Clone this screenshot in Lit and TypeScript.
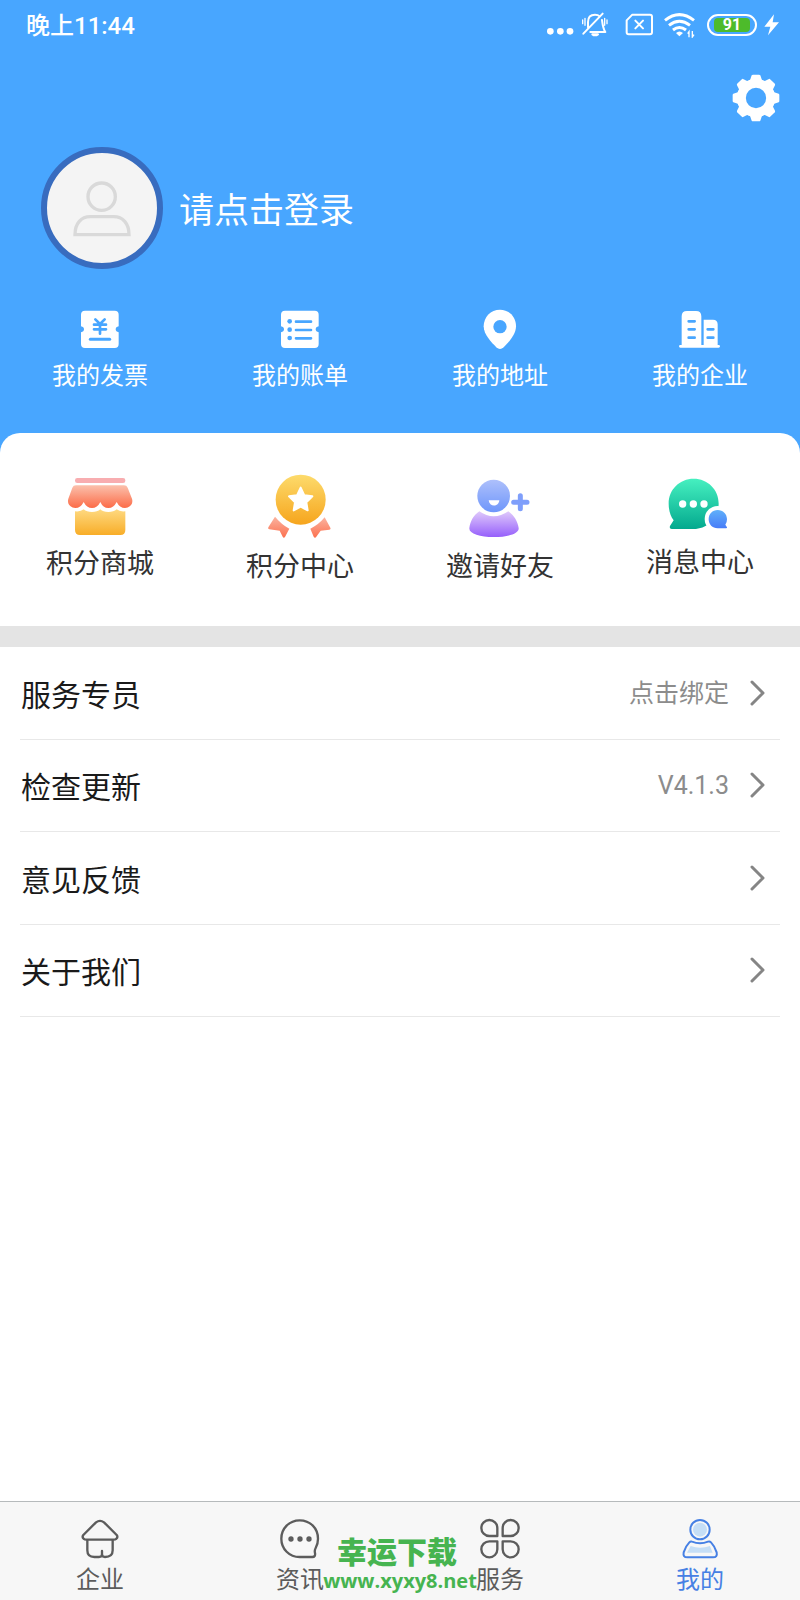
import { LitElement, html, svg, css, type TemplateResult } from "lit";
import { customElement, state } from "lit/decorators.js";

interface Shortcut {
  label: string;
  icon: TemplateResult;
}

interface Row {
  label: string;
  value?: string;
}

const gearTeeth = [0, 45, 90, 135, 180, 225, 270, 315];

const statusDots = html`<svg width="28" height="27" viewBox="78 33 84 81" fill="#fff" aria-hidden="true">
  <circle cx="91" cy="94" r="10" /><circle cx="121" cy="94" r="10" /><circle cx="150" cy="94" r="10" />
</svg>`;

const bellOff = html`<svg width="37" height="27" viewBox="183 33 111 81" fill="none" stroke="#fff" stroke-width="6" stroke-linecap="round" stroke-linejoin="round" aria-hidden="true">
  <path d="M204 82V66C204 50 213 44 225 44C231 44 236 46 239 49" />
  <path d="M246 60C248 76 249 86 256 96H211" />
  <path d="M190 101L248 41" />
  <path d="M217 103Q225 109 234 103Z" fill="#fff" />
  <path d="M195 55V76M188 60V71M254 55V76M261 60V71" stroke-width="4" />
</svg>`;

const simOff = html`<svg width="31" height="27" viewBox="315 33 93 81" fill="none" stroke="#fff" stroke-width="6" stroke-linejoin="round" aria-hidden="true">
  <path d="M337 44H390Q396 44 396 50V97Q396 103 390 103H326Q320 103 320 97V61Z" />
  <path d="M346 62L369 85M369 62L346 85" stroke-linecap="round" />
</svg>`;

const wifi = html`<svg width="37" height="27" viewBox="429 33 111 81" fill="none" stroke="#fff" stroke-width="9" aria-hidden="true">
  <path d="M435 61Q478 27 522 61" />
  <path d="M447 76Q478 52 510 76" />
  <path d="M459 90Q478 75 498 90" />
  <path d="M468 99Q478 90 489 99L478 109Z" fill="#fff" stroke="none" />
  <path d="M507 112V95L503 101M517 93V111L522 104" stroke-width="4" />
</svg>`;

const bolt = html`<svg width="16" height="27" viewBox="732 33 48 81" fill="#fff" aria-hidden="true">
  <path d="M762 43L733 80H751L744 106L777 67H758Z" />
</svg>`;

const gear = html`<svg width="48" height="48" viewBox="-72 -72 144 144" aria-hidden="true">
  <circle r="44" fill="none" stroke="#fff" stroke-width="27" />
  ${gearTeeth.map(
    (a) => svg`<path transform="rotate(${a})" d="M-19 -50L-13 -68Q-12 -70 -9 -70H9Q12 -70 13 -68L19 -50Z" fill="#fff" />`
  )}
</svg>`;

const person = html`<svg width="60" height="60" viewBox="156 143 180 180" fill="none" stroke="#d9d9d9" stroke-width="10" aria-hidden="true">
  <circle cx="245" cy="199" r="41" />
  <path d="M165 313C165 278 184 259 211 259H281C308 259 327 278 327 313Z" />
</svg>`;

const ticket = (x: number) => svg`<path fill="#fff" d="M${x} 59Q${x} 47 ${x + 12} 47H${x + 101}Q${x + 113} 47 ${x + 113} 59V94Q${x + 104} 96 ${x + 104} 103Q${x + 104} 110 ${x + 113} 112V147Q${x + 113} 159 ${x + 101} 159H${x + 12}Q${x} 159 ${x} 147V112Q${x + 9} 110 ${x + 9} 103Q${x + 9} 96 ${x} 94Z" />`;

const quick: Shortcut[] = [
  {
    label: "我的发票",
    icon: html`<svg width="42" height="40" viewBox="237 42 126 120" fill="none" stroke="#48a6ff" stroke-width="8" stroke-linecap="round" aria-hidden="true">
      <g stroke="none">${ticket(243)}</g>
      <path d="M286 73L300 87L314 73M300 87V116M282 89H318M282 103H318" />
      <path d="M271 133H329" stroke-width="9" />
    </svg>`,
  },
  {
    label: "我的账单",
    icon: html`<svg width="42" height="40" viewBox="837 42 126 120" fill="#48a6ff" stroke="#48a6ff" aria-hidden="true">
      <g stroke="none">${ticket(843)}
        <circle cx="869" cy="79" r="7" /><circle cx="869" cy="104" r="7" /><circle cx="869" cy="129" r="7" /></g>
      <path d="M888 80H933M888 105H933M888 130H933" stroke-width="8" stroke-linecap="round" />
    </svg>`,
  },
  {
    label: "我的地址",
    icon: html`<svg width="42" height="40" viewBox="237 42 126 120" aria-hidden="true">
      <path fill="#fff" d="M300 44C272 44 251 66 251 94C251 119 275 143 289 157Q300 167 311 157C325 143 348 119 348 94C348 66 328 44 300 44Z" />
      <circle cx="300" cy="95" r="20" fill="#48a6ff" />
    </svg>`,
  },
  {
    label: "我的企业",
    icon: html`<svg width="42" height="40" viewBox="837 42 126 120" aria-hidden="true">
      <path fill="#fff" d="M845 150V64Q845 48 861 48H888Q904 48 904 64V150H911V74H939Q953 74 953 88V150H956Q960 150 960 154Q960 158 956 158H841Q837 158 837 154Q837 150 841 150Z" />
      <path d="M866 79H884M866 103H884M866 128H884M923 103H940M923 128H940" stroke="#48a6ff" stroke-width="8" stroke-linecap="round" />
    </svg>`,
  },
];

const features: Shortcut[] = [
  {
    label: "积分商城",
    icon: html`<svg width="66" height="64" viewBox="201 42 198 192" aria-hidden="true">
      <defs>
        <linearGradient id="awning" x1="0" y1="0" x2="0" y2="1"><stop offset="0" stop-color="#fbc0ac" /><stop offset="1" stop-color="#fc6c48" /></linearGradient>
        <linearGradient id="stall" x1="0" y1="0" x2="0" y2="1"><stop offset="0" stop-color="#fed980" /><stop offset="1" stop-color="#f8ad28" /></linearGradient>
      </defs>
      <rect x="225" y="54" width="151" height="15" rx="7" fill="#f8adb0" />
      <path fill="url(#awning)" d="M228 76H372Q380 76 383 83L396 116C401 133 388 144 375 144Q359 144 350 126Q341 144 325 144Q309 144 301 126Q292 144 276 144Q260 144 251 126Q242 144 226 144C213 144 200 133 205 116L217 83Q220 76 228 76Z" />
      <path fill="url(#stall)" d="M225 154Q242 156 251 148Q260 156 276 156Q292 156 301 148Q309 156 325 156Q341 156 350 148Q359 156 376 154V210Q376 225 361 225H240Q225 225 225 210Z" />
    </svg>`,
  },
  {
    label: "积分中心",
    icon: html`<svg width="66" height="67" viewBox="801 42 198 201" aria-hidden="true">
      <defs>
        <linearGradient id="medal" x1="0" y1="0" x2="0" y2="1"><stop offset="0" stop-color="#fddb6c" /><stop offset="1" stop-color="#f6a51d" /></linearGradient>
        <linearGradient id="ribbon" x1="0" y1="0" x2="0" y2="1"><stop offset="0" stop-color="#fbb3a0" /><stop offset="1" stop-color="#fc714f" /></linearGradient>
      </defs>
      <circle cx="902" cy="119" r="75" fill="url(#medal)" />
      <path d="M902 83L913 106L937 109L919 127L923 151L902 140L881 151L885 127L867 109L891 106Z" fill="#fff" stroke="#fff" stroke-width="6" stroke-linejoin="round" />
      <path fill="url(#ribbon)" d="M825 170Q844 193 868 206L855 231Q851 236 848 230L839 212L808 208Q802 207 805 202Z" />
      <path fill="url(#ribbon)" d="M974 172Q955 195 931 206L941 230Q945 236 949 230L962 212L988 209Q994 208 991 203Z" />
    </svg>`,
  },
  {
    label: "邀请好友",
    icon: html`<svg width="66" height="67" viewBox="201 42 198 201" aria-hidden="true">
      <defs>
        <linearGradient id="head" x1="0" y1="0" x2="0" y2="1"><stop offset="0" stop-color="#aec0fb" /><stop offset="1" stop-color="#6e96fb" /></linearGradient>
        <linearGradient id="torso" x1="0" y1="0" x2="0" y2="1"><stop offset="0" stop-color="#dfc9fb" /><stop offset="1" stop-color="#965ffb" /></linearGradient>
      </defs>
      <circle cx="281" cy="108" r="49" fill="url(#head)" />
      <path d="M266 121H298C296 142 268 142 266 121Z" fill="#fff" />
      <path fill="url(#torso)" d="M238 154Q281 184 325 154C343 167 353 185 356 204C358 221 323 231 281 231C240 231 206 221 208 204C211 185 219 167 238 154Z" />
      <path d="M361 107V146M341 127H381" stroke="#7f9ffb" stroke-width="15" stroke-linecap="round" />
    </svg>`,
  },
  {
    label: "消息中心",
    icon: html`<svg width="66" height="63" viewBox="801 42 198 189" aria-hidden="true">
      <defs>
        <linearGradient id="bubble" x1="0" y1="0" x2="0" y2="1"><stop offset="0" stop-color="#46f0c0" /><stop offset="1" stop-color="#03a98e" /></linearGradient>
        <linearGradient id="reply" x1="0" y1="0" x2="0" y2="1"><stop offset="0" stop-color="#60b0fa" /><stop offset="1" stop-color="#477cf8" /></linearGradient>
      </defs>
      <path fill="url(#bubble)" d="M881 56C923 56 956 88 956 131C956 174 923 207 881 207H815Q807 206 810 198L821 181C811 168 806 150 806 131C806 88 839 56 881 56Z" />
      <g fill="#fff"><circle cx="848" cy="132" r="11" /><circle cx="880" cy="132" r="11" /><circle cx="912" cy="132" r="11" /></g>
      <circle cx="953" cy="177" r="39" fill="#fff" />
      <path fill="url(#reply)" d="M953 150C969 150 981 162 981 178Q981 188 976 194L981 202Q982 205 978 205H953C937 205 926 193 926 178C926 162 937 150 953 150Z" />
    </svg>`,
  },
];

const rows: Row[] = [
  { label: "服务专员", value: "点击绑定" },
  { label: "检查更新", value: "V4.1.3" },
  { label: "意见反馈" },
  { label: "关于我们" },
];

const petal = "M-8 -8H-32A24 24 0 1 1 -8 -32Z";

const tabs: Shortcut[] = [
  {
    label: "企业",
    icon: html`<svg width="40" height="41" viewBox="240 84 120 123" fill="none" stroke="#5c5c5c" stroke-width="7" stroke-linejoin="round" stroke-linecap="round" aria-hidden="true">
      <path d="M288 97Q300 88 312 97L350 135Q355 142 348 147Q346 149 341 149H259Q254 149 252 147Q245 142 250 135Z" />
      <path d="M262 151V181Q262 201 283 201H297Q306 201 306 193V183V193Q306 201 315 201Q338 201 338 181V151" />
    </svg>`,
  },
  {
    label: "资讯",
    icon: html`<svg width="40" height="41" viewBox="840 84 120 123" fill="none" stroke="#5c5c5c" stroke-width="7" stroke-linejoin="round" aria-hidden="true">
      <path d="M899 91C931 91 954 115 954 146Q954 162 947 174Q943 181 945 189Q947 201 937 201H899C868 201 844 177 844 146C844 115 868 91 899 91Z" />
      <g fill="#5c5c5c" stroke="none"><circle cx="873" cy="147" r="8" /><circle cx="900" cy="147" r="8" /><circle cx="927" cy="147" r="8" /></g>
    </svg>`,
  },
  {
    label: "服务",
    icon: html`<svg width="40" height="41" viewBox="-60 -62 120 123" fill="none" stroke="#5c5c5c" stroke-width="7" stroke-linejoin="round" aria-hidden="true">
      ${[0, 90, 180, 270].map((a) => svg`<path transform="rotate(${a})" d=${petal} />`)}
    </svg>`,
  },
  {
    label: "我的",
    icon: html`<svg width="40" height="41" viewBox="840 84 120 123" fill="none" stroke="#4680e4" stroke-width="6" stroke-linejoin="round" aria-hidden="true">
      <circle cx="900" cy="119" r="21" fill="#c5def6" stroke="none" />
      <path d="M872 168Q900 178 930 168L938 188H861Z" fill="#c5def6" stroke="none" />
      <circle cx="900" cy="119" r="29" />
      <path d="M876 155Q900 165 924 155Q929 153 933 157Q944 168 950 187Q953 202 939 202H862Q848 202 851 187Q857 168 868 157Q872 153 876 155Z" />
    </svg>`,
  },
];

@customElement("app-root")
export class AppRoot extends LitElement {
  @state() private activeTab = 3;

  static styles = css`
    :host {
      display: flex;
      flex-direction: column;
      min-height: 100vh;
      background: #fff;
      color: #1a1a1a;
      font-family: "Noto Sans CJK SC", sans-serif;
    }
    svg {
      display: block;
      flex: none;
    }
    button {
      margin: 0;
      padding: 0;
      border: 0;
      background: none;
      color: inherit;
      font: inherit;
      text-align: inherit;
      cursor: pointer;
    }
    .header {
      display: flex;
      flex-direction: column;
      padding-bottom: 62px;
      background: #48a6ff;
      color: #fff;
    }
    .status {
      display: flex;
      align-items: center;
      justify-content: space-between;
      height: 49px;
      padding: 0 20px 0 26px;
      font-family: Roboto, "Noto Sans CJK SC", sans-serif;
    }
    .time {
      padding-top: 2px;
      font-size: 24px;
      font-weight: 500;
      line-height: 36px;
    }
    .indicators {
      display: flex;
      align-items: center;
      gap: 7px;
    }
    .battery {
      box-sizing: border-box;
      width: 50px;
      height: 22px;
      padding: 2px 5px;
      border: 2px solid #fff;
      border-radius: 11px;
    }
    .level {
      display: block;
      border-radius: 4px;
      background: #4dbb2b;
      font-size: 16px;
      font-weight: 700;
      line-height: 14px;
      text-align: center;
    }
    .settings {
      align-self: flex-end;
      margin: 25px 20px 25px;
    }
    .profile {
      display: flex;
      align-items: center;
      align-self: flex-start;
      gap: 16px;
      margin-left: 41px;
      font-size: 35px;
      line-height: 48px;
    }
    .avatar {
      display: grid;
      place-items: center;
      box-sizing: border-box;
      width: 122px;
      height: 122px;
      border: 6px solid #386cbf;
      border-radius: 50%;
      background: #f4f4f4;
    }
    .grid {
      display: grid;
      grid-template-columns: repeat(4, 1fr);
      align-items: start;
    }
    .item {
      display: flex;
      flex-direction: column;
      align-items: center;
    }
    .quick {
      margin-top: 40px;
      font-size: 24px;
      line-height: 34px;
    }
    .quick .item {
      gap: 8px;
    }
    .features {
      box-sizing: border-box;
      min-height: 193px;
      margin-top: -20px;
      padding: 41px 0 42px;
      border-radius: 20px 20px 0 0;
      background: #fff;
      color: #333;
      font-size: 27px;
      line-height: 36px;
    }
    .features .item {
      gap: 6px;
    }
    .divider {
      height: 21px;
      background: #e4e4e4;
    }
    .list {
      display: grid;
      grid-auto-rows: 1fr;
      height: 370px;
      margin: 0 20px;
      padding: 0;
      list-style: none;
    }
    .entry {
      border-bottom: 1px solid #e8e8e8;
    }
    .row {
      display: flex;
      align-items: center;
      box-sizing: border-box;
      width: 100%;
      height: 100%;
      padding: 0 14px 0 1px;
      font-size: 30px;
      line-height: 44px;
    }
    .value {
      margin-left: auto;
      margin-right: 21px;
      padding-top: 2px;
      color: #8c8c8c;
      font-family: Roboto, "Noto Sans CJK SC", sans-serif;
      font-size: 25px;
    }
    .tabs {
      position: relative;
      margin-top: auto;
      padding: 16px 0 5px;
      border-top: 1px solid #b6babc;
      background: #f7f7f7;
      color: #5c5c5c;
      font-size: 24px;
      line-height: 34px;
    }
    .tab {
      display: flex;
      flex-direction: column;
      align-items: center;
      gap: 2px;
    }
    .active {
      color: #4680e4;
    }
    .watermark {
      position: absolute;
      left: 50%;
      bottom: 5px;
      display: flex;
      flex-direction: column;
      align-items: center;
      transform: translateX(-50%);
      color: #46b450;
      font-family: "Open Sans", "Noto Sans CJK SC", sans-serif;
      font-weight: 700;
      pointer-events: none;
    }
    .mark-name {
      padding-right: 6px;
      font-size: 30px;
      font-weight: 900;
      line-height: 30px;
    }
    .mark-site {
      font-size: 20px;
      line-height: 28px;
    }
  `;

  private renderItem(item: Shortcut) {
    return html`<button class="item">${item.icon}<span>${item.label}</span></button>`;
  }

  private renderRow(row: Row) {
    return html`<li class="entry">
      <button class="row">
        <span>${row.label}</span>
        <span class="value">${row.value ?? ""}</span>
        <svg width="16" height="26" viewBox="0 0 16 26" fill="none" stroke="#858585" stroke-width="3" stroke-linecap="round" stroke-linejoin="round" aria-hidden="true">
          <path d="M2 2L13 13L2 24" />
        </svg>
      </button>
    </li>`;
  }

  private renderTab(tab: Shortcut, index: number) {
    const active = index === this.activeTab;
    return html`<button
      class=${active ? "tab active" : "tab"}
      aria-current=${active ? "page" : "false"}
      @click=${() => (this.activeTab = index)}
    >
      ${tab.icon}<span>${tab.label}</span>
    </button>`;
  }

  render() {
    return html`
      <header class="header">
        <div class="status">
          <span class="time">晚上11:44</span>
          <div class="indicators">
            ${statusDots}${bellOff}${simOff}${wifi}
            <div class="battery"><span class="level">91</span></div>
            ${bolt}
          </div>
        </div>
        <button class="settings" aria-label="设置">${gear}</button>
        <button class="profile">
          <span class="avatar">${person}</span>
          <span>请点击登录</span>
        </button>
        <nav class="grid quick">${quick.map((q) => this.renderItem(q))}</nav>
      </header>
      <section class="grid features">${features.map((f) => this.renderItem(f))}</section>
      <div class="divider"></div>
      <ul class="list">${rows.map((r) => this.renderRow(r))}</ul>
      <nav class="grid tabs">
        ${tabs.map((t, i) => this.renderTab(t, i))}
        <div class="watermark">
          <span class="mark-name">幸运下载</span>
          <span class="mark-site">www.xyxy8.net</span>
        </div>
      </nav>
    `;
  }
}
